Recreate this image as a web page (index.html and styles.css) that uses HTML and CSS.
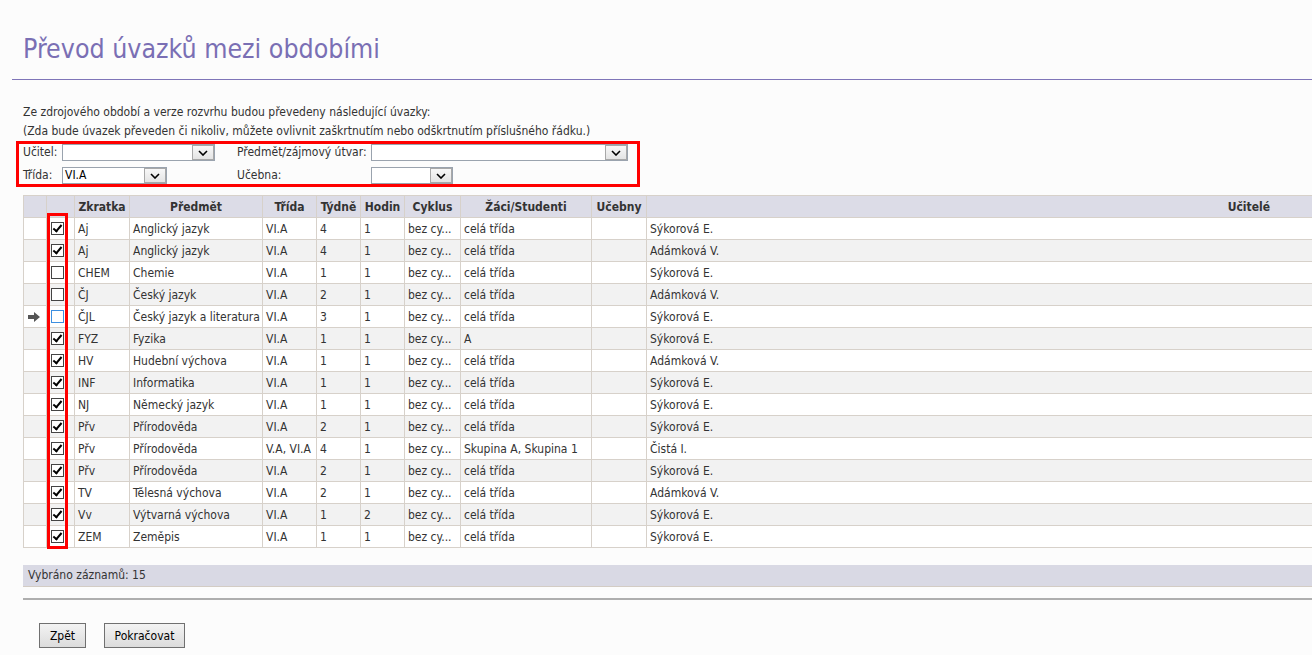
FILE: index.html
```html
<!DOCTYPE html>
<html lang="cs">
<head>
<meta charset="utf-8">
<title>Převod úvazků mezi obdobími</title>
<link rel="stylesheet" href="styles.css">
</head>
<body>
<div class="page">
  <h1 class="title">Převod úvazků mezi obdobími</h1>
  <div class="content">
    <p class="intro">Ze zdrojového období a verze rozvrhu budou převedeny následující úvazky:<br>(Zda bude úvazek převeden či nikoliv, můžete ovlivnit zaškrtnutím nebo odškrtnutím příslušného řádku.)</p>

    <div class="filters">
      <div class="frow frow-1">
        <span class="flabel l1">Učitel:</span>
        <div class="select s-ucitel"><span class="sval"></span><span class="sarrow"><svg viewBox="0 0 10 6" width="10" height="6"><path d="M1 1 L5 5 L9 1" fill="none" stroke="#000" stroke-width="1.6"/></svg></span></div>
        <span class="flabel l2">Předmět/zájmový útvar:</span>
        <div class="select s-predmet"><span class="sval"></span><span class="sarrow"><svg viewBox="0 0 10 6" width="10" height="6"><path d="M1 1 L5 5 L9 1" fill="none" stroke="#000" stroke-width="1.6"/></svg></span></div>
      </div>
      <div class="frow frow-2">
        <span class="flabel l1">Třída:</span>
        <div class="select s-trida"><span class="sval">VI.A</span><span class="sarrow"><svg viewBox="0 0 10 6" width="10" height="6"><path d="M1 1 L5 5 L9 1" fill="none" stroke="#000" stroke-width="1.6"/></svg></span></div>
        <span class="flabel l2">Učebna:</span>
        <div class="select s-ucebna"><span class="sval"></span><span class="sarrow"><svg viewBox="0 0 10 6" width="10" height="6"><path d="M1 1 L5 5 L9 1" fill="none" stroke="#000" stroke-width="1.6"/></svg></span></div>
      </div>
    </div>

    <div class="grid-wrap">
      <table class="grid">
        <colgroup>
          <col class="c-ind"><col class="c-chk"><col class="c-zkr"><col class="c-pred"><col class="c-tr"><col class="c-tyd"><col class="c-hod"><col class="c-cyk"><col class="c-zaci"><col class="c-uceb"><col class="c-ucit">
        </colgroup>
        <thead>
          <tr>
            <th></th><th></th><th>Zkratka</th><th>Předmět</th><th>Třída</th><th>Týdně</th><th>Hodin</th><th>Cyklus</th><th>Žáci/Studenti</th><th>Učebny</th><th class="th-ucit">Učitelé</th>
          </tr>
        </thead>
        <tbody>
          <tr><td class="ind"></td><td class="chk"><span class="cb on"></span></td><td>Aj</td><td>Anglický jazyk</td><td>VI.A</td><td>4</td><td>1</td><td>bez cy...</td><td>celá třída</td><td></td><td>Sýkorová E.</td></tr>
          <tr><td class="ind"></td><td class="chk"><span class="cb on"></span></td><td>Aj</td><td>Anglický jazyk</td><td>VI.A</td><td>4</td><td>1</td><td>bez cy...</td><td>celá třída</td><td></td><td>Adámková V.</td></tr>
          <tr><td class="ind"></td><td class="chk"><span class="cb"></span></td><td>CHEM</td><td>Chemie</td><td>VI.A</td><td>1</td><td>1</td><td>bez cy...</td><td>celá třída</td><td></td><td>Sýkorová E.</td></tr>
          <tr><td class="ind"></td><td class="chk"><span class="cb"></span></td><td>ČJ</td><td>Český jazyk</td><td>VI.A</td><td>2</td><td>1</td><td>bez cy...</td><td>celá třída</td><td></td><td>Adámková V.</td></tr>
          <tr><td class="ind"><svg class="cur" viewBox="0 0 12 10" width="12" height="10"><path d="M0 3 H6 V0 L12 5 L6 10 V7 H0 Z" fill="#555"/></svg></td><td class="chk"><span class="cb focus"></span></td><td>ČJL</td><td>Český jazyk a literatura</td><td>VI.A</td><td>3</td><td>1</td><td>bez cy...</td><td>celá třída</td><td></td><td>Sýkorová E.</td></tr>
          <tr><td class="ind"></td><td class="chk"><span class="cb on"></span></td><td>FYZ</td><td>Fyzika</td><td>VI.A</td><td>1</td><td>1</td><td>bez cy...</td><td>A</td><td></td><td>Sýkorová E.</td></tr>
          <tr><td class="ind"></td><td class="chk"><span class="cb on"></span></td><td>HV</td><td>Hudební výchova</td><td>VI.A</td><td>1</td><td>1</td><td>bez cy...</td><td>celá třída</td><td></td><td>Adámková V.</td></tr>
          <tr><td class="ind"></td><td class="chk"><span class="cb on"></span></td><td>INF</td><td>Informatika</td><td>VI.A</td><td>1</td><td>1</td><td>bez cy...</td><td>celá třída</td><td></td><td>Sýkorová E.</td></tr>
          <tr><td class="ind"></td><td class="chk"><span class="cb on"></span></td><td>NJ</td><td>Německý jazyk</td><td>VI.A</td><td>1</td><td>1</td><td>bez cy...</td><td>celá třída</td><td></td><td>Sýkorová E.</td></tr>
          <tr><td class="ind"></td><td class="chk"><span class="cb on"></span></td><td>Přv</td><td>Přírodověda</td><td>VI.A</td><td>2</td><td>1</td><td>bez cy...</td><td>celá třída</td><td></td><td>Sýkorová E.</td></tr>
          <tr><td class="ind"></td><td class="chk"><span class="cb on"></span></td><td>Přv</td><td>Přírodověda</td><td>V.A, VI.A</td><td>4</td><td>1</td><td>bez cy...</td><td>Skupina A, Skupina 1</td><td></td><td>Čistá I.</td></tr>
          <tr><td class="ind"></td><td class="chk"><span class="cb on"></span></td><td>Přv</td><td>Přírodověda</td><td>VI.A</td><td>2</td><td>1</td><td>bez cy...</td><td>celá třída</td><td></td><td>Sýkorová E.</td></tr>
          <tr><td class="ind"></td><td class="chk"><span class="cb on"></span></td><td>TV</td><td>Tělesná výchova</td><td>VI.A</td><td>2</td><td>1</td><td>bez cy...</td><td>celá třída</td><td></td><td>Adámková V.</td></tr>
          <tr><td class="ind"></td><td class="chk"><span class="cb on"></span></td><td>Vv</td><td>Výtvarná výchova</td><td>VI.A</td><td>1</td><td>2</td><td>bez cy...</td><td>celá třída</td><td></td><td>Sýkorová E.</td></tr>
          <tr><td class="ind"></td><td class="chk"><span class="cb on"></span></td><td>ZEM</td><td>Zeměpis</td><td>VI.A</td><td>1</td><td>1</td><td>bez cy...</td><td>celá třída</td><td></td><td>Sýkorová E.</td></tr>
        </tbody>
      </table>
      <div class="chk-highlight"></div>
    </div>

    <div class="summary">Vybráno záznamů: 15</div>
    <div class="sep"></div>

    <div class="buttons">
      <button class="btn btn-back">Zpět</button>
      <button class="btn btn-next">Pokračovat</button>
    </div>
  </div>
</div>
</body>
</html>
```

FILE: styles.css
```css
html, body {
  margin: 0;
  padding: 0;
}
body {
  background: #fcfcfc;
  font-family: "DejaVu Sans Condensed", "DejaVu Sans", sans-serif;
  font-size: 12px;
  color: #333;
  overflow: hidden;
}
.page {
  padding-left: 12px;
}
.title {
  margin: 0;
  padding: 32px 0 0 11px;
  height: 47px;
  border-bottom: 1px solid #7f75b8;
  font-weight: normal;
  font-size: 26.5px;
  line-height: 34px;
  color: #7a6fb4;
}
.content {
  padding-left: 11px;
}
.intro {
  margin: 0;
  padding-top: 23px;
  line-height: 19px;
}
.filters {
  margin: 0 0 0 -7px;
  width: 614px;
  height: 40px;
  border: 3px solid #f00;
  padding: 0 0 0 4px;
  box-sizing: content-box;
}
.frow {
  display: flex;
  align-items: flex-start;
}
.frow-1 { height: 22px; }
.frow-2 { height: 18px; padding-top: 1px; }
.flabel {
  line-height: 17px;
}
.l1 { width: 39px; }
.l2 { width: 134px; }
.select {
  display: flex;
  height: 17px;
  box-sizing: border-box;
  border: 1px solid #9aa3ae;
  background: #fff;
}
.sval {
  flex: 1;
  padding-left: 2px;
  line-height: 15px;
  color: #000;
}
.sarrow {
  width: 22px;
  height: 15px;
  box-sizing: border-box;
  border: 1px solid #a8a8a8;
  background: linear-gradient(#f8f8f8, #e4e4e4);
  display: flex;
  align-items: center;
  justify-content: center;
}
.s-ucitel { width: 153px; margin-right: 22px; }
.s-trida { width: 105px; margin-right: 70px; }
.s-predmet { width: 257px; }
.s-ucebna { width: 82px; }

.grid-wrap {
  position: relative;
  margin-top: 8px;
}
.grid {
  border-collapse: collapse;
  table-layout: fixed;
  width: 1290px;
}
.c-ind { width: 23px; }
.c-chk { width: 28px; }
.c-zkr { width: 55px; }
.c-pred { width: 133px; }
.c-tr { width: 54px; }
.c-tyd { width: 44px; }
.c-hod { width: 44px; }
.c-cyk { width: 56px; }
.c-zaci { width: 131px; }
.c-uceb { width: 55px; }
.grid th, .grid td {
  border: 1px solid #d7d1ca;
  height: 22px;
  padding: 0 3px;
  white-space: nowrap;
  overflow: hidden;
  box-sizing: border-box;
}
.grid th {
  background: #dcdce7;
  font-weight: bold;
  color: #333;
  text-align: center;
}
.grid th.th-ucit {
  text-align: right;
  padding-right: 42px;
}
.grid td {
  color: #333;
  text-align: left;
}
.grid tbody tr:nth-child(odd) td { background: #fff; }
.grid tbody tr:nth-child(even) td { background: #f2f2f2; }
.grid tbody td.ind { background: #fdfdf1; padding: 0 0 0 4px; }
.grid td.chk { padding: 0 0 0 4px; }
.cur { display: block; }
.cb {
  display: block;
  width: 13px;
  height: 13px;
  box-sizing: border-box;
  border: 1px solid #444;
  background: #fff;
  position: relative;
}
.cb.focus { border-color: #3d8fe0; }
.cb.on::after {
  content: "";
  position: absolute;
  left: 3px;
  top: 0px;
  width: 3px;
  height: 7px;
  border: solid #000;
  border-width: 0 2px 2px 0;
  transform: rotate(40deg);
}
.chk-highlight {
  position: absolute;
  left: 24px;
  top: 18px;
  width: 21px;
  height: 336px;
  box-sizing: border-box;
  border: 3px solid #f00;
  pointer-events: none;
}
.summary {
  margin-top: 17px;
  height: 21px;
  line-height: 21px;
  padding-left: 5px;
  background: #d9d9e4;
  border-bottom: 1px solid #d3ccc4;
}
.sep {
  margin-top: 11px;
  height: 2px;
  background: #aeaeae;
}
.buttons {
  display: flex;
  gap: 18px;
  padding: 23px 0 0 16px;
}
.btn {
  font-family: "DejaVu Sans Condensed", "DejaVu Sans", sans-serif;
  font-size: 12px;
  color: #000;
  height: 25px;
  padding: 0;
  border: 1px solid #707070;
  border-radius: 0;
  background: linear-gradient(#f3f3f3, #dcdcdc);
}
.btn-back { width: 47px; }
.btn-next { width: 81px; }
```
